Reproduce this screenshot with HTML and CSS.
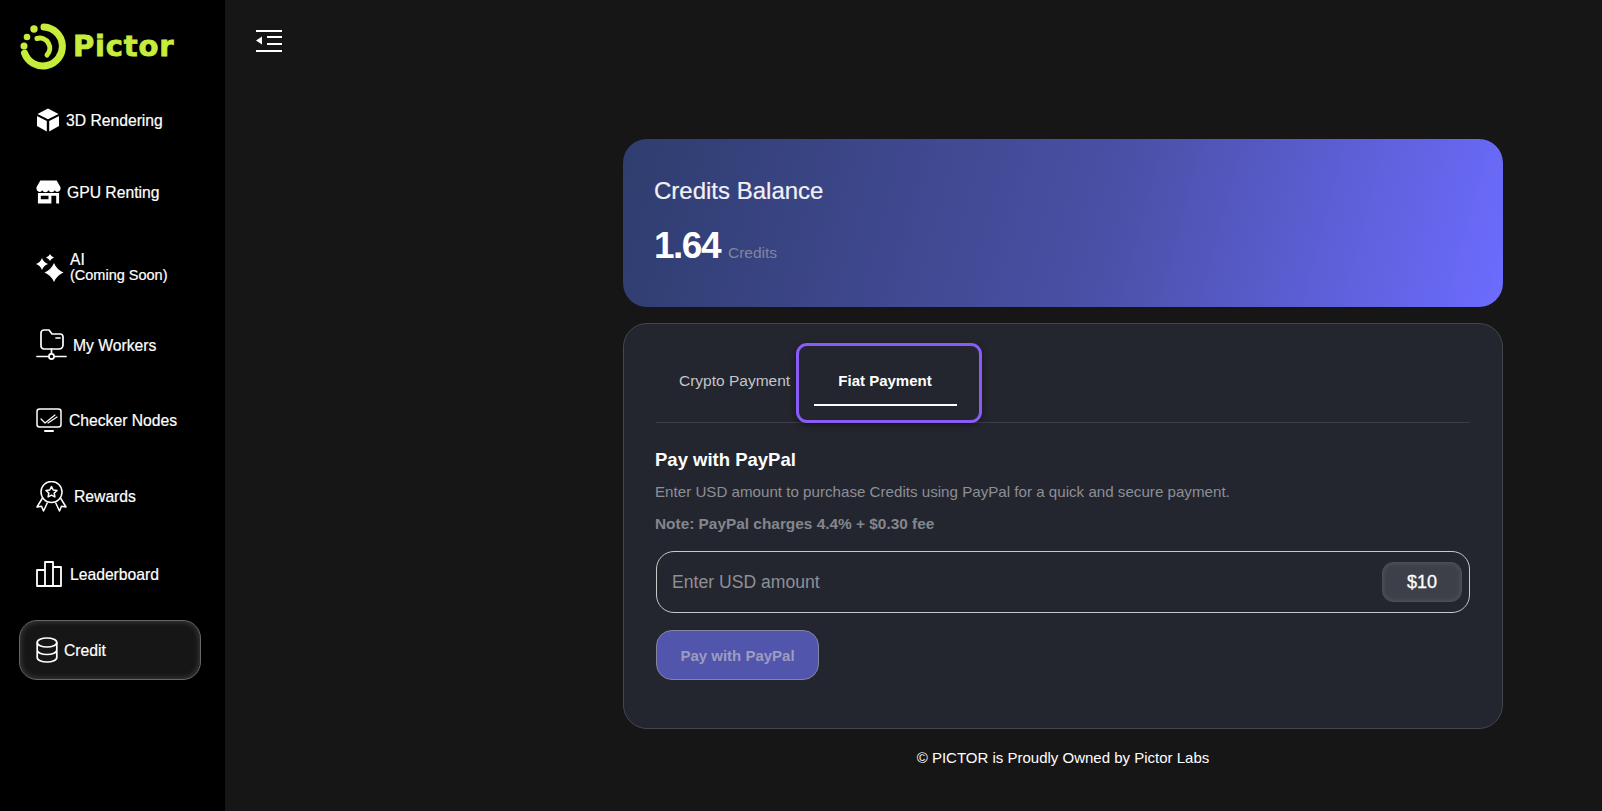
FILE: index.html
```html
<!DOCTYPE html>
<html lang="en">
<head>
  <meta charset="UTF-8" />
  <title>Pictor - Credit</title>
  <link rel="stylesheet" href="styles.css">
</head>
<body>
  <div class="layout">
    <aside class="sidebar">
      <div class="logo">
        <svg width="48" height="48" viewBox="0 0 48 48" fill="none">
          <path d="M24 5 A19.500 19.500 0 1 1 4.500 31" stroke="#c6ec3c" stroke-width="7" stroke-linecap="round"/>
          <path d="M17 16.500 A10 10 0 0 1 27 33" stroke="#c6ec3c" stroke-width="5" stroke-linecap="round"/>
          <circle cx="14" cy="7" r="3.700" fill="#c6ec3c"/>
          <circle cx="7" cy="15" r="3.300" fill="#c6ec3c"/>
          <circle cx="4" cy="24" r="3.500" fill="#c6ec3c"/>
        </svg>
        <span class="logo-text">Pictor</span>
      </div>
      <nav class="nav">
        <a class="nav-item first">
          <svg width="24" height="24" viewBox="0 0 24 24" fill="#fff"><path d="M12 .5 22.500 6 12 11.200 1.500 6zM1 8l9.800 5v10.500L1 18zM23 8v10l-9.800 5.500V13z"/></svg>
          <span>3D Rendering</span>
        </a>
        <a class="nav-item">
          <svg width="25" height="24" viewBox="0 0 26 24" fill="#fff"><path d="M4.500 0h17L25.500 7v2a3.200 3.200 0 0 1-6 1.200 3.600 3.600 0 0 1-6.500 0 3.600 3.600 0 0 1-6.500 0 3.200 3.200 0 0 1-6-1.200V7z"/><path fill-rule="evenodd" d="M2 13h22v11H2zM5 16v3.500h8V16zM16 16v8h5v-8z"/></svg>
          <span>GPU Renting</span>
        </a>
        <a class="nav-item">
          <svg width="28" height="28" viewBox="0 0 28 28" fill="#fff"><path d="M18 9Q20.800 15.700 27.500 18.500 20.800 21.300 18 28 15.200 21.300 8.500 18.500 15.200 15.700 18 9zM6 4Q7.600 8.400 12 10 7.600 11.600 6 16 4.400 11.600 0 10 4.400 8.400 6 4zM14 0Q15 2.500 18 3.500 15 4.500 14 7 13 4.500 10 3.500 13 2.500 14 0z"/></svg>
          <span class="two-line">AI<br><small>(Coming Soon)</small></span>
        </a>
        <a class="nav-item workers">
          <svg width="31" height="31" viewBox="0 0 31 31" fill="none" stroke="#fff" stroke-width="1.700" stroke-linecap="round" stroke-linejoin="round"><path d="M5 17V4a3 3 0 0 1 3-3h5l3 4h8a3 3 0 0 1 3 3v8a4 4 0 0 1-4 4H8a3 3 0 0 1-3-3z"/><path d="M20 9h4M15.500 20v4M1 27.500h11M19 27.500h11"/><circle cx="15.500" cy="27.500" r="2.600"/></svg>
          <span>My Workers</span>
        </a>
        <a class="nav-item">
          <svg width="27" height="24" viewBox="0 0 27 24" fill="none" stroke="#fff" stroke-width="1.500" stroke-linecap="round" stroke-linejoin="round"><rect x="1" y="1" width="24" height="18" rx="2.500"/><path d="M5 11l4 4 10-8M12 15l9-6" stroke-width="1.200"/><path d="M9 23h8" stroke-width="2"/></svg>
          <span>Checker Nodes</span>
        </a>
        <a class="nav-item">
          <svg width="32" height="31" viewBox="0 0 32 31" fill="none" stroke="#fff" stroke-width="1.500" stroke-linejoin="round"><circle cx="15.500" cy="11" r="10.500"/><path d="M15.500 5.500l1.700 3.500 3.800.5-2.800 2.600.7 3.800-3.400-1.800-3.400 1.800.7-3.800L10 9.500l3.800-.5z"/><path d="M6.500 17 1 26l4.500-.8L7.500 30l4-8.500M24.500 17l5.500 9-4.500-.8-2 4.800-4-8.500"/></svg>
          <span>Rewards</span>
        </a>
        <a class="nav-item board">
          <svg width="28" height="26" viewBox="0 0 28 26" fill="none" stroke="#fff" stroke-width="1.800" stroke-linejoin="round"><path d="M9 9H1v16h24V6h-8M9 25V1h8v24"/></svg>
          <span>Leaderboard</span>
        </a>
        <a class="nav-item active">
          <svg width="22" height="26" viewBox="0 0 22 26" fill="none" stroke="#fff" stroke-width="1.700"><ellipse cx="11" cy="5.500" rx="9.800" ry="4.500"/><path d="M1.200 5.500v15c0 2.500 4.400 4.500 9.800 4.500s9.800-2 9.800-4.500v-15M1.200 13c0 2.500 4.400 4.500 9.800 4.500s9.800-2 9.800-4.500"/></svg>
          <span>Credit</span>
        </a>
      </nav>
    </aside>

    <main class="main">
      <div class="topbar">
        <svg width="26" height="22" viewBox="0 0 26 22" fill="#fff"><path d="M0 0h26v2H0zM11 6h15v2H11zM11 13h15v2H11zM0 20h26v2H0zM0 10.500 6 6.500v8z"/></svg>
      </div>
      <div class="content">
        <div class="balance-card">
          <h2>Credits Balance</h2>
          <div class="balance-row"><span class="amount">1.64</span><span class="unit">Credits</span></div>
        </div>
        <div class="pay-card">
          <div class="tabs">
            <div class="tab">Crypto Payment</div>
            <div class="tab tab-active"><span>Fiat Payment</span></div>
          </div>
          <h3>Pay with PayPal</h3>
          <p class="desc">Enter USD amount to purchase Credits using PayPal for a quick and secure payment.</p>
          <p class="note">Note: PayPal charges 4.4% + $0.30 fee</p>
          <div class="amount-input">
            <span class="placeholder">Enter USD amount</span>
            <span class="chip">$10</span>
          </div>
          <button class="pay-btn">Pay with PayPal</button>
        </div>
        <div class="footer">© PICTOR is Proudly Owned by Pictor Labs</div>
      </div>
    </main>
  </div>
</body>
</html>
```

FILE: styles.css
```css
* {
  box-sizing: border-box;
}

body {
  margin: 0;
  background: #161616;
  color: #fff;
  font-family: 'Liberation Sans', Arial, sans-serif;
  height: 811px;
  overflow: hidden;
}

.layout {
  display: flex;
  height: 811px;
}

.sidebar {
  width: 225px;
  flex-shrink: 0;
  background: #000;
  padding: 22px 0 0 19px;
}

.logo {
  display: flex;
  align-items: center;
  gap: 5px;
  height: 48px;
  margin-bottom: 24px;
  padding-left: 1px;
}

.logo-text {
  font-family: 'DejaVu Sans', sans-serif;
  font-weight: 700;
  font-size: 29px;
  color: #c6ec3c;
  letter-spacing: 0.800px;
  -webkit-text-stroke: 0.800px #c6ec3c;
}

.nav {
  display: flex;
  flex-direction: column;
  gap: 16px;
  width: 182px;
}

.nav-item {
  display: flex;
  align-items: center;
  gap: 6px;
  height: 60px;
  padding-left: 16px;
  font-size: 15.700px;
  color: #fff;
  border: 1px solid transparent;
  border-radius: 18px;
  -webkit-text-stroke: 0.2px #fff;
}

.nav-item svg {
  flex-shrink: 0;
}

.nav-item span {
  margin-top: 2px;
}

.nav-item.first {
  height: 52px;
}

.nav-item .two-line {
  line-height: 15px;
  margin-top: -2px;
}

.two-line small {
  font-size: 14.500px;
}

.nav-item.workers span {
  margin-top: 4px;
}

.nav-item.board {
  margin-top: 2px;
}

.nav-item.active {
  background: #161616;
  border: 1px solid #666;
  box-shadow: inset 0 0 6px rgba(255, 255, 255, 0.22);
}

.main {
  flex: 1;
  padding: 30px 0 0 31px;
}

.topbar {
  height: 22px;
}

.content {
  width: 880px;
  margin: 87px 0 0 367px;
}

.balance-card {
  height: 168px;
  padding: 38px 31px;
  border-radius: 24px;
  background: linear-gradient(105deg, #2f3d6e 0%, #4a50a6 55%, #6c6cff 100%);
}

.balance-card h2 {
  margin: 0;
  font-size: 24px;
  font-weight: 400;
  color: #f1f1f6;
  -webkit-text-stroke: 0.2px #f1f1f6;
}

.balance-row {
  display: flex;
  align-items: baseline;
  gap: 8px;
  margin-top: 20px;
}

.amount {
  font-size: 37px;
  font-weight: 700;
  letter-spacing: -1.500px;
}

.unit {
  font-size: 15.500px;
  color: #83859d;
}

.pay-card {
  height: 406px;
  margin-top: 16px;
  padding: 19px 32px;
  border: 1px solid #44464e;
  border-radius: 24px;
  background: #23262f;
}

.tabs {
  display: flex;
  height: 80px;
  border-bottom: 1px solid #3a3d45;
  padding-left: 23px;
}

.tab {
  display: flex;
  align-items: center;
  flex-shrink: 0;
  height: 80px;
  padding-bottom: 4px;
  width: 117px;
  font-size: 15.500px;
  color: #c4c5c9;
}

.tab-active {
  justify-content: center;
  width: 186px;
  padding-bottom: 6px;
  padding-right: 8px;
  font-size: 15px;
  color: #fff;
  font-weight: 700;
  position: relative;
  border: 3px solid #8a5cf6;
  border-radius: 11px;
  box-shadow: 0 2px 6px rgba(0, 0, 0, 0.4);
}

.tab-active::after {
  content: "";
  position: absolute;
  left: 15px;
  right: 22px;
  bottom: 14px;
  height: 2px;
  background: #fff;
}

.pay-card h3 {
  margin: 26px 0 0 -1px;
  font-size: 18.500px;
  font-weight: 700;
  line-height: 22px;
}

.desc {
  margin: 11px 0 0 -1px;
  font-size: 15.150px;
  line-height: 20px;
  color: #8d8f96;
}

.note {
  margin: 12px 0 0 -1px;
  font-size: 15.400px;
  line-height: 20px;
  font-weight: 700;
  color: #84868d;
}

.amount-input {
  display: flex;
  align-items: center;
  justify-content: space-between;
  height: 62px;
  margin-top: 17px;
  padding: 0 7px 0 15px;
  border: 1px solid #c9c9c9;
  border-radius: 18px;
}

.placeholder {
  font-size: 17.600px;
  color: #8f9096;
}

.chip {
  display: flex;
  align-items: center;
  justify-content: center;
  width: 80px;
  height: 40px;
  border-radius: 11px;
  background: #3d4049;
  border: 1px solid #4b4e57;
  font-size: 18px;
  color: #fff;
  -webkit-text-stroke: 0.3px #fff;
  box-shadow: inset 0 0 5px rgba(255, 255, 255, 0.12);
}

.pay-btn {
  display: block;
  width: 163px;
  height: 50px;
  margin-top: 17px;
  border: 1px solid #84849f;
  border-radius: 16px;
  background: #5155ac;
  color: #9c9cc0;
  font-family: inherit;
  font-size: 15px;
  font-weight: 700;
}

.footer {
  margin-top: 20px;
  text-align: center;
  font-size: 15px;
  color: #fff;
}
```
